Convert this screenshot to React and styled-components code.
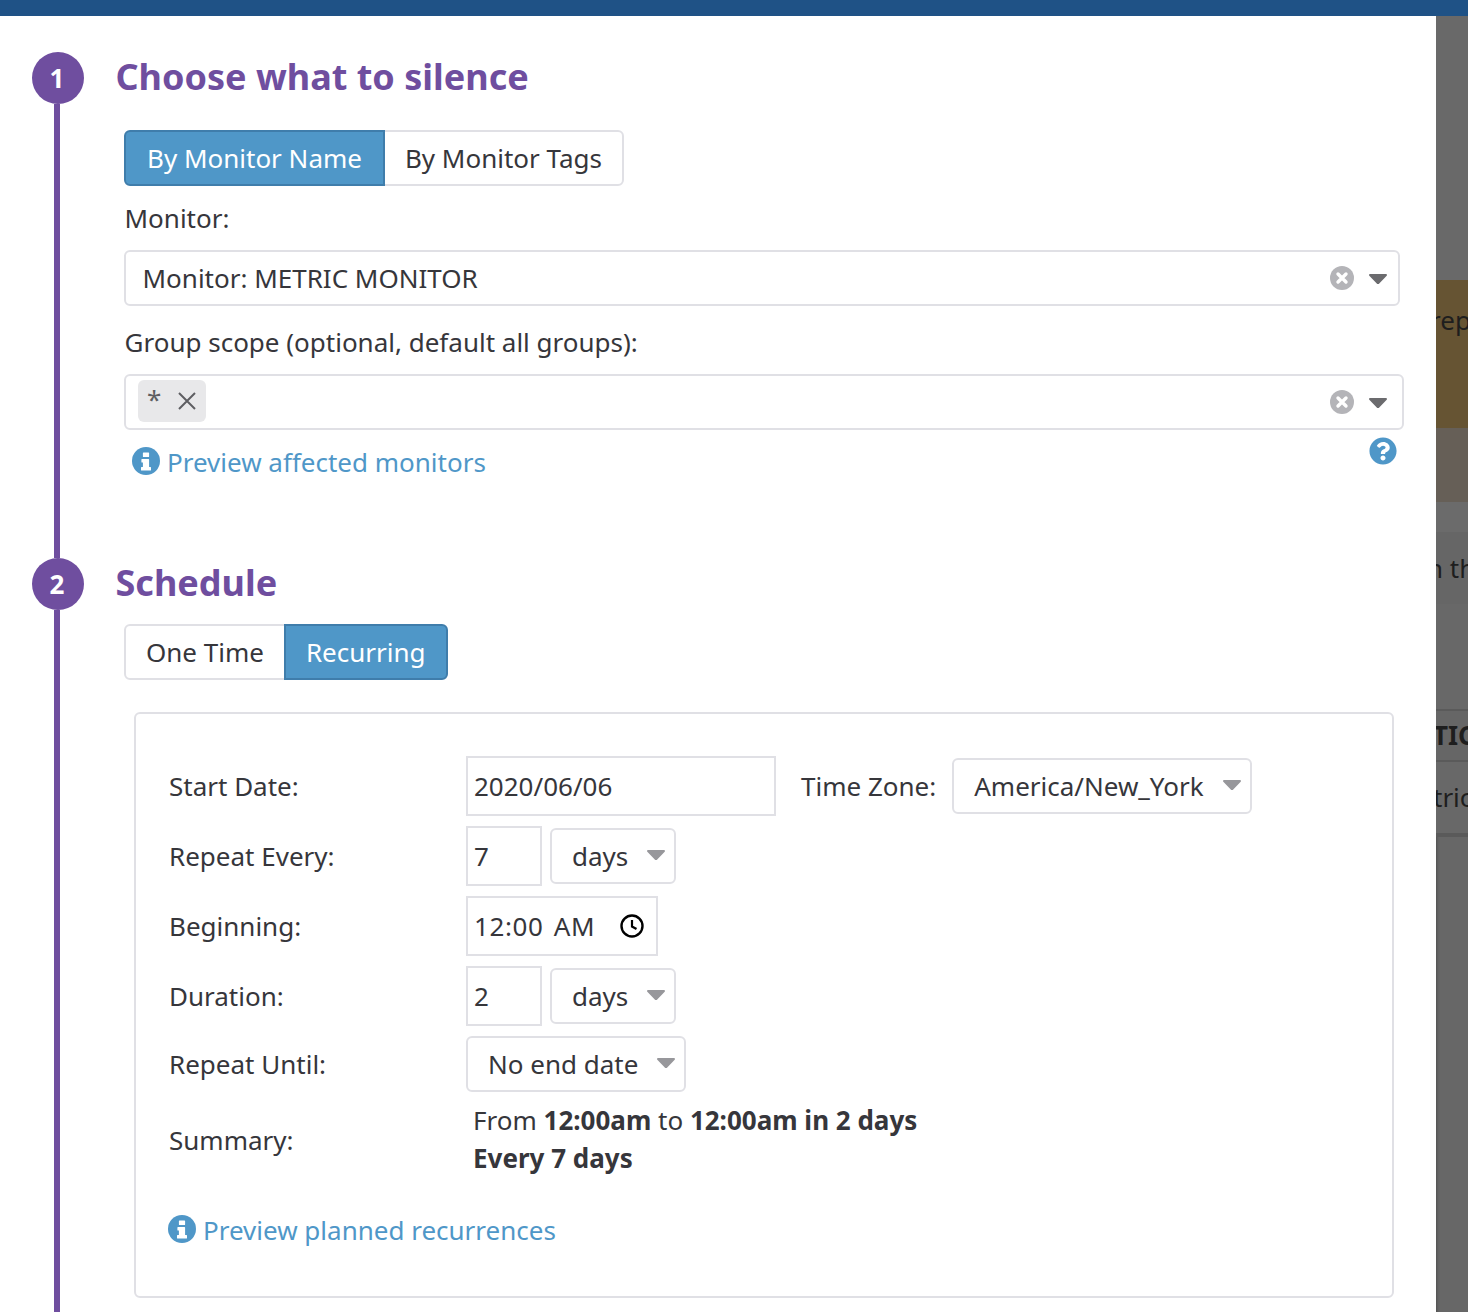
import React from 'react'
import styled, { createGlobalStyle } from 'styled-components'
import { FaQuestionCircle } from 'react-icons/fa'

const GlobalStyle = createGlobalStyle`
    html, body {
        margin: 0;
        padding: 0;
        background: #fff;
    }
    body {
        font-family: "Noto Sans", "Open Sans", sans-serif;
        font-size: 26px;
        color: #36363b;
    }
`

const Page = styled.div`
    width: 1468px;
    height: 1312px;
    overflow: hidden;
    display: flex;
    flex-direction: column;
`

const TopBar = styled.div`
    height: 16px;
    flex: none;
    background: #1f5286;
`

const Main = styled.div`
    flex: 1;
    display: flex;
    min-height: 0;
`

const Panel = styled.div`
    width: 1436px;
    flex: none;
    padding-top: 36px;
    box-sizing: border-box;
    background: #fff;
`

const Backdrop = styled.div`
    flex: 1;
    min-width: 0;
    overflow: hidden;
    display: flex;
    flex-direction: column;
    background: #676767;
    box-shadow: inset 3px 0 3px -2px rgba(0, 0, 0, 0.25);
`

const Band = styled.div`
    height: ${(p) => p.$h}px;
    flex: none;
    background: ${(p) => p.$bg || '#696969'};
    border-bottom: ${(p) => p.$line || 0}px solid #5a5a5a;
    padding-bottom: ${(p) => p.$lift || 0}px;
    box-sizing: border-box;
    display: flex;
    align-items: center;
    white-space: nowrap;
    color: #1e1e1e;
    font-size: 26px;
    font-weight: ${(p) => (p.$bold ? 700 : 400)};
`

const BandText = styled.span`
    margin-left: ${(p) => p.$x}px;
`

const Step = styled.section`
    display: flex;
    height: ${(p) => p.$h}px;
`

const Rail = styled.div`
    width: 52px;
    margin-left: 32px;
    flex: none;
    display: flex;
    flex-direction: column;
`

const Circle = styled.div`
    width: 52px;
    height: 52px;
    flex: none;
    box-sizing: border-box;
    padding-right: 2px;
    border-radius: 50%;
    background: #6f4e9f;
    color: #fff;
    font-weight: 700;
    font-size: 26px;
    display: flex;
    align-items: center;
    justify-content: center;
`

const RailLine = styled.div`
    flex: 1;
    width: 6px;
    margin-left: 22px;
    background: #6f4e9f;
`

const Body = styled.div`
    margin-left: 31.5px;
    flex: 1;
    min-width: 0;
`

const Title = styled.h2`
    margin: 0;
    font-size: 36px;
    line-height: 50px;
    font-weight: 700;
    color: #6f4e9f;
`

const Content = styled.div`
    padding-left: 8.5px;
    margin-top: ${(p) => p.$top}px;
`

const Tabs = styled.div`
    display: flex;
    width: max-content;
`

const Tab = styled.div`
    height: 56px;
    box-sizing: border-box;
    padding: 0 ${(p) => p.$pad || 20}px;
    display: flex;
    align-items: center;
    border: 2px solid ${(p) => (p.$active ? '#3f7dab' : '#e0e0e5')};
    background: ${(p) => (p.$active ? '#4f97c8' : '#fff')};
    color: ${(p) => (p.$active ? '#fff' : '#36363b')};
    margin-left: ${(p) => (p.$first ? 0 : -2)}px;
    border-radius: ${(p) => (p.$first ? '6px 0 0 6px' : '0 6px 6px 0')};
    position: relative;
    z-index: ${(p) => (p.$active ? 1 : 0)};
`

const FieldLabel = styled.div`
    line-height: 36px;
    margin: ${(p) => p.$top}px 0 14px 0.5px;
`

const SelectBox = styled.div`
    width: ${(p) => p.$w}px;
    height: 56px;
    box-sizing: border-box;
    display: flex;
    align-items: center;
    gap: 15px;
    border: 2px solid #e0e0e5;
    border-radius: 6px;
    background: #fff;
    padding: 0 ${(p) => p.$right}px 0 ${(p) => p.$left}px;
`

const SelectValue = styled.div`
    flex: 1;
    min-width: 0;
    white-space: nowrap;
`

const Chip = styled.div`
    width: 68px;
    height: 42px;
    box-sizing: border-box;
    border-radius: 6px;
    background: #e8e8ea;
    color: #5e5e62;
    display: flex;
    align-items: flex-start;
    justify-content: space-between;
    padding: 4px 10px 0 9px;
    margin: -2px 0 0 -6px;
    line-height: 30px;
`

const ChipClose = styled.svg`
    width: 18px;
    height: 18px;
    margin-top: 8px;
`

const LinkRow = styled.div`
    display: flex;
    justify-content: space-between;
    align-items: flex-start;
    margin: ${(p) => p.$top}px 0 0 ${(p) => p.$left}px;
`

const PreviewLink = styled.a`
    display: flex;
    align-items: center;
    gap: 7px;
    color: #4f97c8;
    line-height: 36px;
`

const InfoSvg = styled.svg`
    width: 28px;
    height: 28px;
    margin-top: -3px;
    flex: none;
`

const HelpIcon = styled(FaQuestionCircle)`
    width: 28px;
    height: 28px;
    margin: -7px 39px 0 0;
    color: #4f97c8;
`

const ScheduleBox = styled.div`
    margin: 32px 0 0 10px;
    width: 1260px;
    height: 586px;
    box-sizing: border-box;
    border: 2px solid #e0e0e5;
    border-radius: 6px;
    padding: 42px 0 0 33px;
`

const FormGrid = styled.div`
    display: grid;
    grid-template-columns: 297px 1fr;
    row-gap: 10px;
    align-items: center;
`

const RowLabel = styled.div`
    line-height: 36px;
`

const RowControls = styled.div`
    display: flex;
    align-items: center;
    gap: 8px;
`

const TextInput = styled.div`
    width: ${(p) => p.$w}px;
    height: 60px;
    box-sizing: border-box;
    border: 2px solid #e0e0e5;
    padding: 0 0 0 6px;
    display: flex;
    align-items: center;
    justify-content: space-between;
    white-space: nowrap;
`

const ClockIcon = styled.svg`
    width: 24px;
    height: 24px;
    margin-right: 12px;
    color: #000;
`

const TimeText = styled.span`
    letter-spacing: 0.6px;
    word-spacing: 3px;
`

const ZoneLabel = styled.span`
    margin-left: 17px;
    margin-right: 8px;
`

const Summary = styled.div`
    padding-left: 7px;
    line-height: 38px;
    margin-top: -1px;
`

const Caret = styled.svg`
    width: 18px;
    height: 10px;
    flex: none;
    margin-top: ${(p) => p.$top ?? 0}px;
    color: ${(p) => p.$color || '#6b6b6e'};
`

const ClearIcon = styled.svg`
    width: 24px;
    height: 24px;
    flex: none;
`

const Clear = () => (
    <ClearIcon viewBox="0 0 24 24">
        <circle cx="12" cy="12" r="12" fill="#b4b4b8" />
        <path d="M8 8l8 8M16 8l-8 8" stroke="#fff" strokeWidth="3.4" strokeLinecap="round" />
    </ClearIcon>
)

const DownCaret = (props) => (
    <Caret viewBox="0 0 18 10" {...props}>
        <path d="M1 0h16a1 1 0 0 1 .7 1.7l-7.7 8a1.4 1.4 0 0 1-2 0l-7.7-8A1 1 0 0 1 1 0z" fill="currentColor" />
    </Caret>
)

const InfoIcon = () => (
    <InfoSvg viewBox="0 0 28 28">
        <circle cx="14" cy="14" r="14" fill="#4f97c8" />
        <path
            d="M11.5 5.5h5a.6.6 0 0 1 .6.6v3.3a.6.6 0 0 1-.6.6h-5a.6.6 0 0 1-.6-.6V6.100a.6.6 0 0 1 .6-.6zM10 12h6.500a.6.6 0 0 1 .6.6v7.400h1.300a.6.6 0 0 1 .6.6v2.300a.6.6 0 0 1-.6.6H9.600a.6.6 0 0 1-.6-.6v-2.300a.6.6 0 0 1 .6-.6h1.300v-4.500H10a.6.6 0 0 1-.6-.6v-2.300A.6.6 0 0 1 10 12z"
            fill="#fff"
        />
    </InfoSvg>
)

const SmallSelect = ({ w, children }) => (
    <SelectBox $w={w} $left={20} $right={9}>
        <SelectValue>{children}</SelectValue>
        <DownCaret $color="#97979b" $top={-2} />
    </SelectBox>
)

const App = () => {
    return (
        <Page>
            <GlobalStyle />
            <TopBar />
            <Main>
                <Panel>
                    <Step $h={506}>
                        <Rail>
                            <Circle>1</Circle>
                            <RailLine />
                        </Rail>
                        <Body>
                            <Title>Choose what to silence</Title>
                            <Content $top={28}>
                                <Tabs>
                                    <Tab $active $first $pad={21}>By Monitor Name</Tab>
                                    <Tab>By Monitor Tags</Tab>
                                </Tabs>
                                <FieldLabel $top={14}>Monitor:</FieldLabel>
                                <SelectBox $w={1276} $left={16.5} $right={11}>
                                    <SelectValue>Monitor: METRIC MONITOR</SelectValue>
                                    <Clear />
                                    <DownCaret $top={1} />
                                </SelectBox>
                                <FieldLabel $top={18}>Group scope (optional, default all groups):</FieldLabel>
                                <SelectBox $w={1280} $left={18} $right={15}>
                                    <SelectValue>
                                        <Chip>
                                            *
                                            <ChipClose viewBox="0 0 18 18">
                                                <path d="M1 1l16 16M17 1L1 17" stroke="#5e5e62" strokeWidth="2" />
                                            </ChipClose>
                                        </Chip>
                                    </SelectValue>
                                    <Clear />
                                    <DownCaret $top={1} />
                                </SelectBox>
                                <LinkRow $top={14} $left={8}>
                                    <PreviewLink>
                                        <InfoIcon />
                                        Preview affected monitors
                                    </PreviewLink>
                                    <HelpIcon />
                                </LinkRow>
                            </Content>
                        </Body>
                    </Step>
                    <Step $h={754}>
                        <Rail>
                            <Circle>2</Circle>
                            <RailLine />
                        </Rail>
                        <Body>
                            <Title>Schedule</Title>
                            <Content $top={16}>
                                <Tabs>
                                    <Tab $first>One Time</Tab>
                                    <Tab $active>Recurring</Tab>
                                </Tabs>
                                <ScheduleBox>
                                    <FormGrid>
                                        <RowLabel>Start Date:</RowLabel>
                                        <RowControls>
                                            <TextInput $w={310}>2020/06/06</TextInput>
                                            <ZoneLabel>Time Zone:</ZoneLabel>
                                            <SelectBox $w={300} $left={20} $right={9}>
                                                <SelectValue>America/New_York</SelectValue>
                                                <DownCaret $color="#97979b" $top={-2} />
                                            </SelectBox>
                                        </RowControls>
                                        <RowLabel>Repeat Every:</RowLabel>
                                        <RowControls>
                                            <TextInput $w={76}>7</TextInput>
                                            <SmallSelect w={126}>days</SmallSelect>
                                        </RowControls>
                                        <RowLabel>Beginning:</RowLabel>
                                        <RowControls>
                                            <TextInput $w={192}>
                                                <TimeText>12:00 AM</TimeText>
                                                <ClockIcon viewBox="0 0 24 24">
                                                    <circle cx="12" cy="12" r="10.5" fill="none" stroke="currentColor" strokeWidth="2.4" />
                                                    <path d="M12 6v6.5l4.5 2.5" fill="none" stroke="currentColor" strokeWidth="2.2" />
                                                </ClockIcon>
                                            </TextInput>
                                        </RowControls>
                                        <RowLabel>Duration:</RowLabel>
                                        <RowControls>
                                            <TextInput $w={76}>2</TextInput>
                                            <SmallSelect w={126}>days</SmallSelect>
                                        </RowControls>
                                        <RowLabel>Repeat Until:</RowLabel>
                                        <RowControls>
                                            <SmallSelect w={220}>No end date</SmallSelect>
                                        </RowControls>
                                        <RowLabel>Summary:</RowLabel>
                                        <Summary>
                                            From <b>12:00am</b> to <b>12:00am in 2 days</b>
                                            <br />
                                            <b>Every 7 days</b>
                                        </Summary>
                                    </FormGrid>
                                    <LinkRow $top={35} $left={-1}>
                                        <PreviewLink>
                                            <InfoIcon />
                                            Preview planned recurrences
                                        </PreviewLink>
                                    </LinkRow>
                                </ScheduleBox>
                            </Content>
                        </Body>
                    </Step>
                </Panel>
                <Backdrop>
                    <Band $h={264} />
                    <Band $h={148} $bg="#665433" $lift={68}><BandText $x={-6}>repeat</BandText></Band>
                    <Band $h={74} $bg="#665f57" />
                    <Band $h={30} $bg="#6b6b6b" />
                    <Band $h={72} $bg="#666666"><BandText $x={-9}>n the</BandText></Band>
                    <Band $h={107} $bg="#686868" $line={2} />
                    <Band $h={51} $bg="#666666" $bold $line={2} $lift={2}><BandText $x={-3}>TIC</BandText></Band>
                    <Band $h={75} $bg="#686868" $line={4} $lift={2}><BandText $x={-3}>tric</BandText></Band>
                </Backdrop>
            </Main>
        </Page>
    )
}

export default App
